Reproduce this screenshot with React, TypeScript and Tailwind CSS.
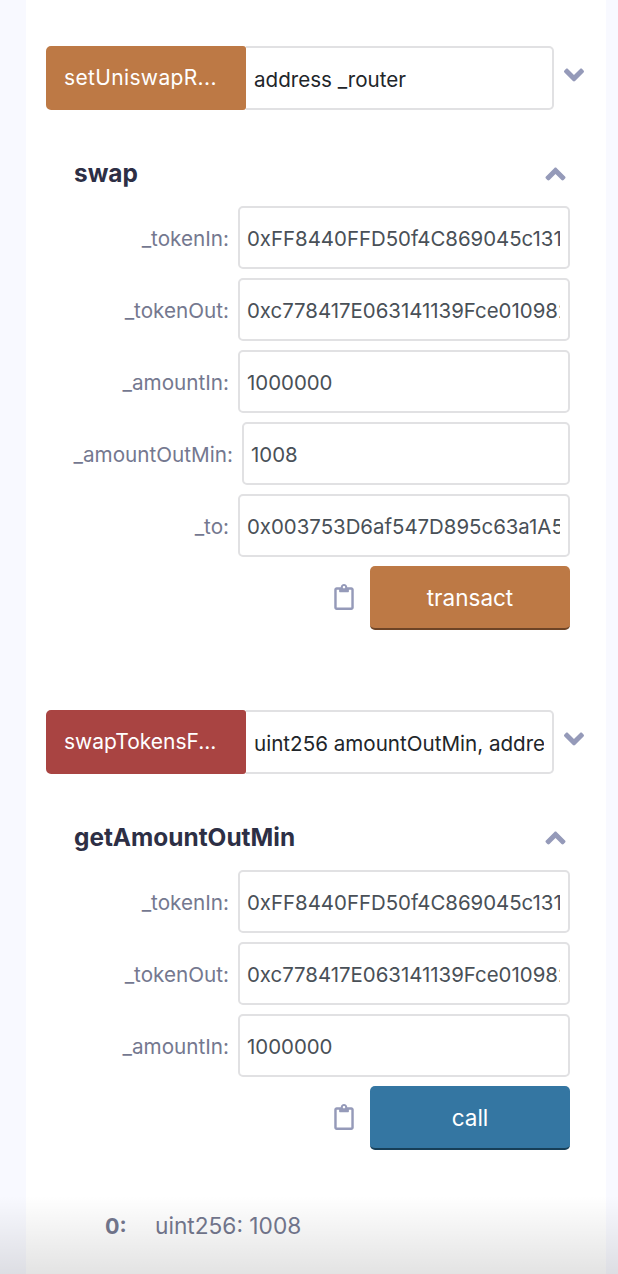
import React from "react";
import { FaAngleDown, FaAngleUp, FaRegClipboard } from "react-icons/fa";

const font = "font-['Inter','Liberation_Sans',sans-serif]";

function ActionRow({ name, color, placeholder, tight }: { name: string; color: string; placeholder: string; tight?: boolean }) {
  return (
    <div className="flex h-16 items-start">
      <button className={`h-16 w-[200px] shrink-0 rounded-l-[5px] rounded-r-[3px] px-[18px] text-left text-[21px] text-white ${tight ? "" : "tracking-[0.35px]"} ${color}`}>{name}</button>
      <input
        readOnly
        value={placeholder}
        className="h-16 w-[308px] rounded-r-[5px] border-2 border-l-0 border-[#e1e1e3] bg-white pl-2 pr-2 pt-[2px] text-[20.6px] text-[#212529] outline-none"
      />
      <FaAngleDown className="ml-[8px] mt-[13px] h-[32px] w-[25px] text-[#959ab9]" />
    </div>
  );
}

function Field({ label, value, wide }: { label: string; value: string; wide?: boolean }) {
  return (
    <div className="flex h-[72px] items-start justify-end">
      <label className="mt-[21px] pr-[9px] text-right text-[20.7px] leading-[24px] text-[#74788f]">{label}</label>
      <input
        readOnly
        value={value}
        className={`h-[63px] ${wide ? "w-[328px]" : "w-[332px]"} rounded-[5px] border-2 border-[#e1e1e3] bg-white pl-[7px] pr-2 pt-[2px] text-[20.4px] text-[#495057] outline-none`}
      />
    </div>
  );
}

function Card({ title, fields, action, color }: { title: string; fields: { label: string; value: string; wide?: boolean }[]; action: string; color: string }) {
  return (
    <div className="pl-[28px] pr-[16px]">
      <div className="flex h-[33px] items-center justify-between">
        <h3 className="text-[24.4px] font-bold leading-[33px] text-[#2d2f45]">{title}</h3>
        <FaAngleUp className="mr-[2px] h-[32px] w-[25px] text-[#959ab9]" />
      </div>
      <div className="mt-[16px]">
        {fields.map((f) => (
          <Field key={f.label} {...f} />
        ))}
      </div>
      <div className="flex h-16 items-center justify-end">
        <FaRegClipboard className="mr-[15px] -mt-[2px] h-[26px] w-[22px] text-[#959ab9]" />
        <button className={`h-16 w-[200px] rounded-[5px] border-b-2 pt-[1px] text-[22.5px] text-white ${color}`}>{action}</button>
      </div>
    </div>
  );
}

export default function App() {
  return (
    <div className={`relative h-[1274px] w-[618px] overflow-hidden bg-[#f8f9ff] pl-[26px] pr-3 ${font}`}>
      <div className="h-full bg-white px-5 pt-[46px]">
        <ActionRow name="setUniswapR..." color="bg-[#bd7945]" placeholder="address _router" />
        <div className="mt-[47px]">
          <Card
            title="swap"
            action="transact"
            color="bg-[#bd7945] border-[#6e4426]"
            fields={[
              { label: "_tokenIn:", value: "0xFF8440FFD50f4C869045c131a2B8" },
              { label: "_tokenOut:", value: "0xc778417E063141139Fce010982780" },
              { label: "_amountIn:", value: "1000000" },
              { label: "_amountOutMin:", value: "1008", wide: true },
              { label: "_to:", value: "0x003753D6af547D895c63a1A5D2e1" },
            ]}
          />
        </div>
        <div className="mt-[80px]">
          <ActionRow name="swapTokensF..." tight color="bg-[#a94442]" placeholder="uint256 amountOutMin, address _to" />
        </div>
        <div className="mt-[47px]">
          <Card
            title="getAmountOutMin"
            action="call"
            color="bg-[#3476a2] border-[#173f58]"
            fields={[
              { label: "_tokenIn:", value: "0xFF8440FFD50f4C869045c131a2B8" },
              { label: "_tokenOut:", value: "0xc778417E063141139Fce010982780" },
              { label: "_amountIn:", value: "1000000" },
            ]}
          />
        </div>
        <div className="mt-[62px] flex items-baseline pl-[59px] leading-[28px] text-[#74788f]">
          <span className="w-[50px] text-[21.5px] font-bold">0:</span>
          <span className="text-[22.7px]">uint256: 1008</span>
        </div>
      </div>
      <div className="pointer-events-none absolute inset-x-0 bottom-0 h-[78px] bg-gradient-to-b from-[#00000000] to-[#0000001c]" />
    </div>
  );
}
